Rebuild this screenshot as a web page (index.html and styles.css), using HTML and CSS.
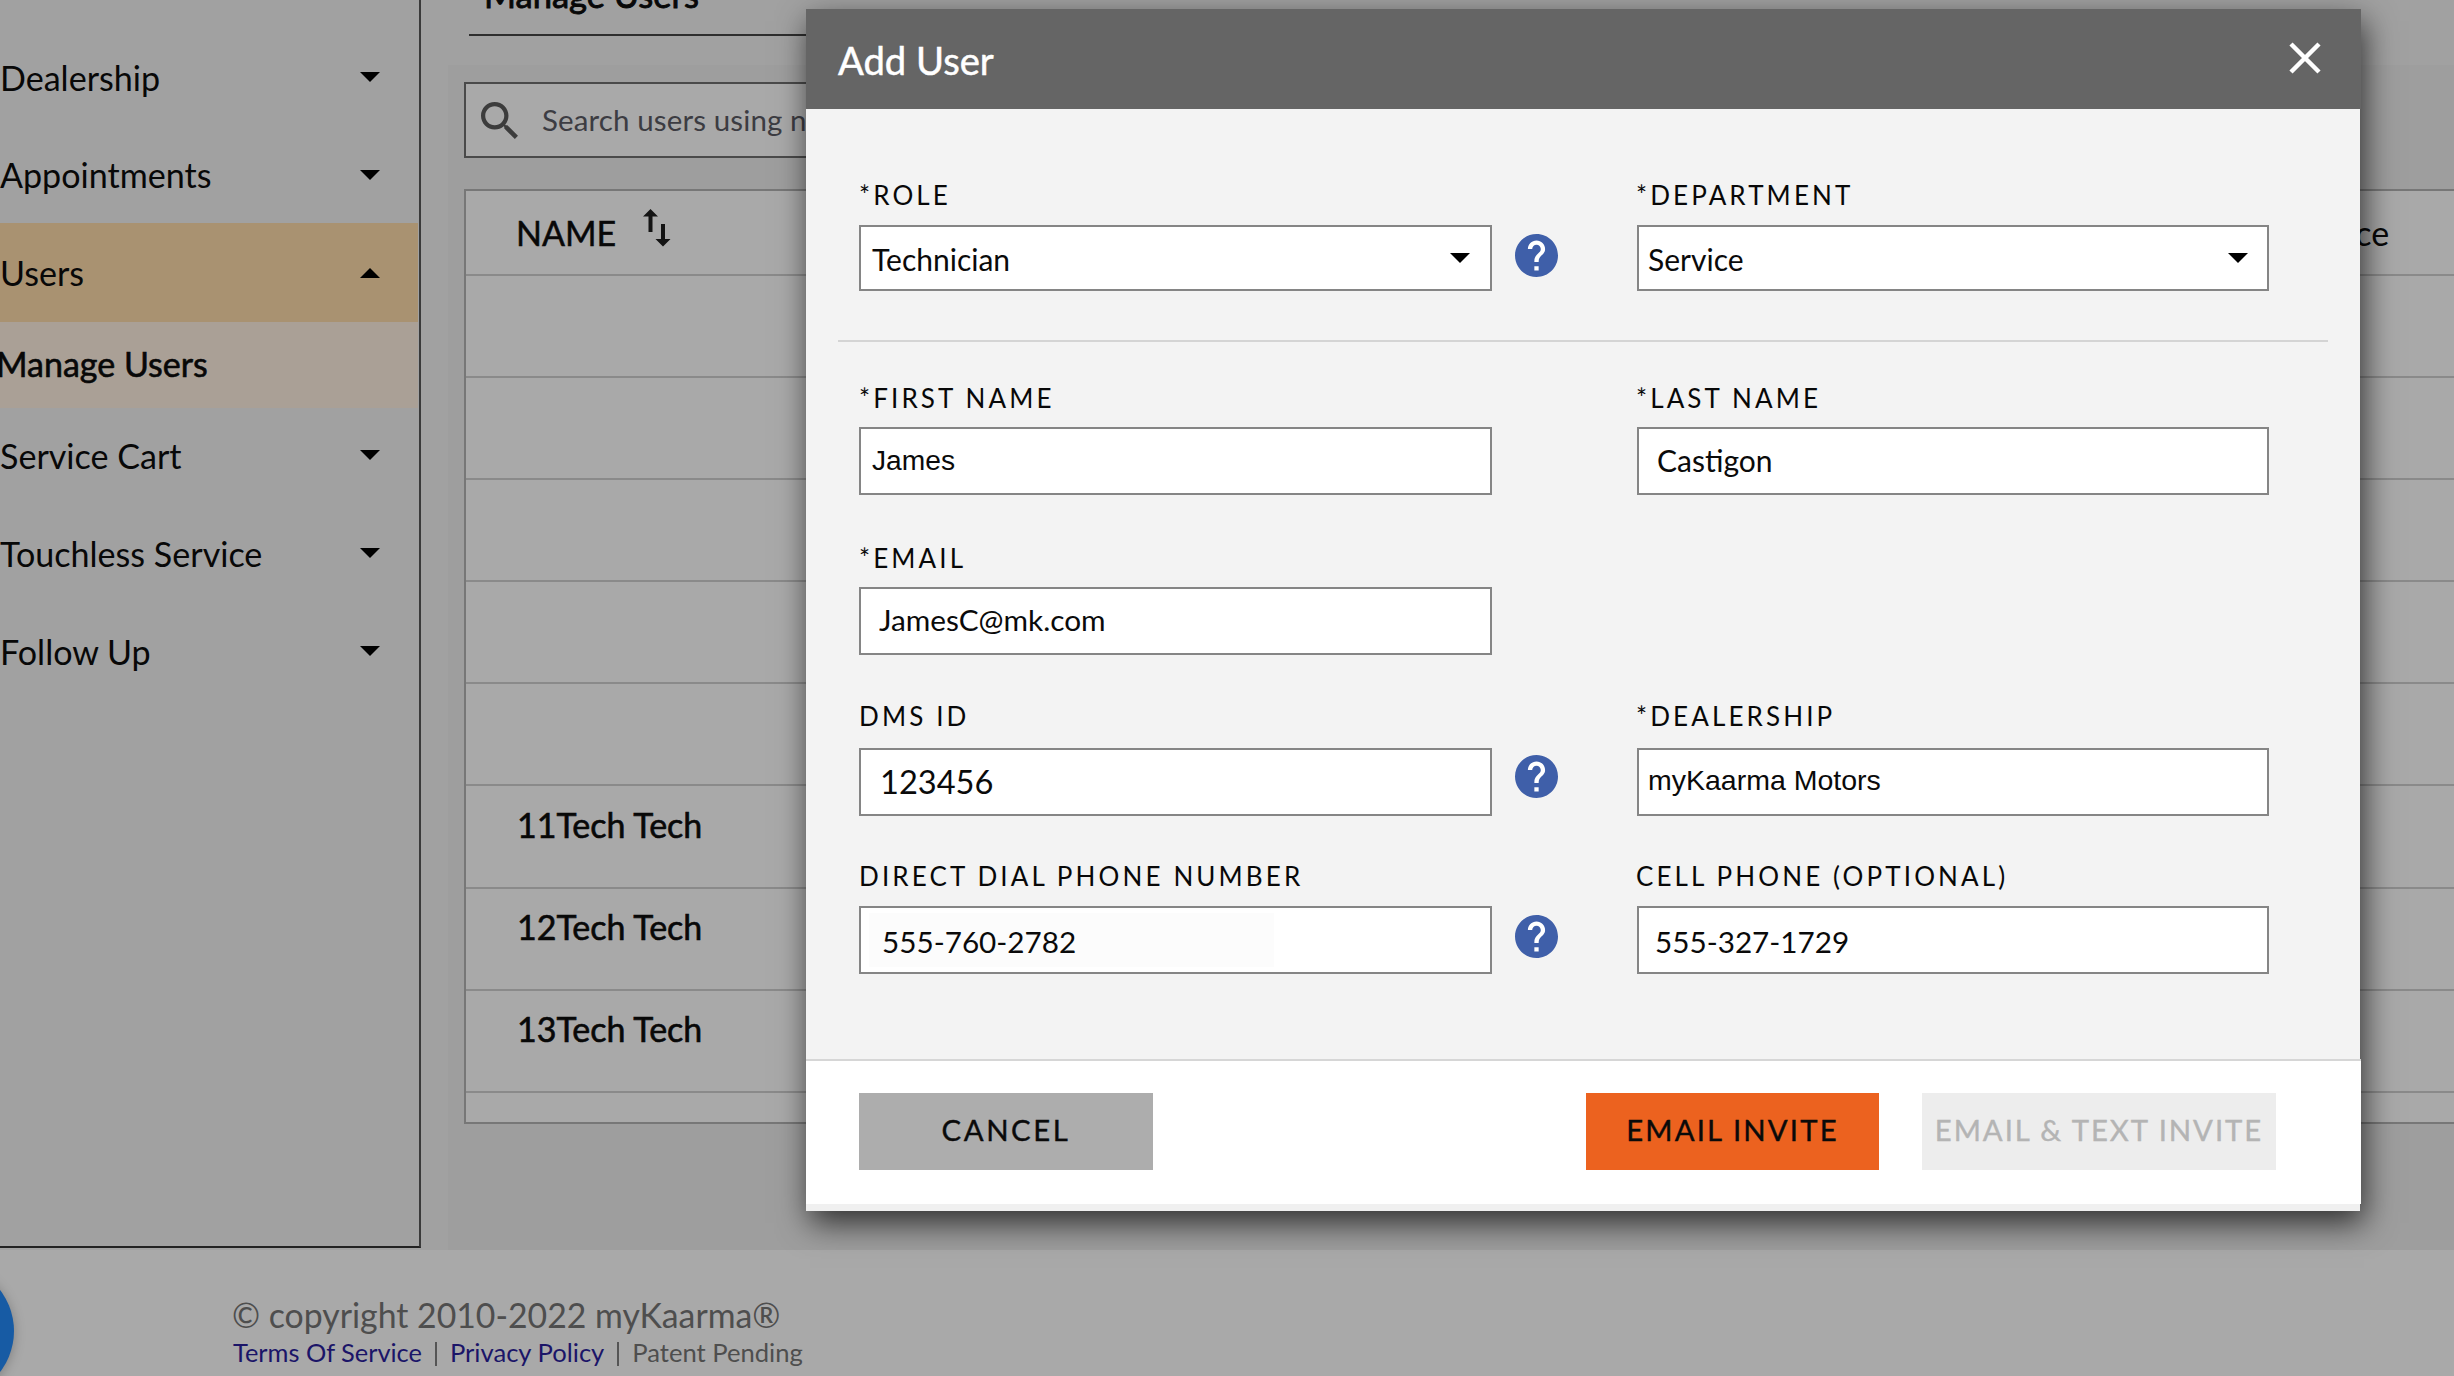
FILE: index.html
```html
<!DOCTYPE html>
<html lang="en">
<head>
<meta charset="utf-8">
<title>Manage Users</title>
<link rel="stylesheet" href="styles.css">
</head>
<body>
<svg class="defs" aria-hidden="true">
  <symbol id="help" viewBox="2 2 20 20">
    <circle cx="12" cy="12" r="9.5" fill="#fff"/>
    <path fill="#3f5fa9" d="M12 2C6.48 2 2 6.48 2 12s4.480 10 10 10 10-4.480 10-10S17.520 2 12 2zm1 17h-2v-2h2v2zm2.070-7.750l-.9.920C13.450 12.900 13 13.500 13 15h-2v-.5c0-1.100.450-2.100 1.170-2.830l1.240-1.260c.370-.360.590-.860.590-1.410 0-1.100-.9-2-2-2s-2 .9-2 2H8c0-2.210 1.790-4 4-4s4 1.790 4 4c0 .880-.360 1.680-.930 2.250z"/>
  </symbol>
</svg>

<div class="app">
  <nav class="sidebar">
    <a class="nav-item"><span>Dealership</span><i class="caret"></i></a>
    <a class="nav-item nav-item--appointments"><span>Appointments</span><i class="caret"></i></a>
    <a class="nav-item nav-item--open"><span>Users</span><i class="caret caret--up"></i></a>
    <a class="nav-sub">Manage Users</a>
    <a class="nav-item nav-item--after"><span>Service Cart</span><i class="caret"></i></a>
    <a class="nav-item"><span>Touchless Service</span><i class="caret"></i></a>
    <a class="nav-item"><span>Follow Up</span><i class="caret"></i></a>
  </nav>

  <main class="main">
    <header class="page-head"><h1 class="page-title">Manage Users</h1></header>
    <section class="content">
      <div class="search">
        <svg class="search-icon" viewBox="3 3 17.5 17.5"><path d="M15.500 14h-.79l-.28-.27C15.410 12.590 16 11.110 16 9.500 16 5.910 13.090 3 9.500 3S3 5.910 3 9.500 5.910 16 9.500 16c1.610 0 3.090-.59 4.230-1.570l.27.28v.79l5 4.990L20.490 19l-4.990-5zm-6 0C7.010 14 5 11.990 5 9.500S7.010 5 9.500 5 14 7.010 14 9.500 11.990 14 9.500 14z"/></svg>
        <span>Search users using name</span>
      </div>
      <div class="table">
        <div class="table-head">
          <div class="col-name">NAME
            <svg class="sort-icon" viewBox="0 0 28 38"><path d="M7.500 0L15 7.500H9.500V23H5.500V7.500H0zM18 15h4v15h5.500L20 37.500 12.500 30H18z"/></svg>
          </div>
          <div class="col-service">Service</div>
        </div>
        <div class="row"></div>
        <div class="row"></div>
        <div class="row"></div>
        <div class="row"></div>
        <div class="row"></div>
        <div class="row">11Tech Tech</div>
        <div class="row">12Tech Tech</div>
        <div class="row">13Tech Tech</div>
      </div>
    </section>
  </main>
</div>

<footer class="footer">
  <div class="copyright">© copyright 2010-2022 myKaarma®</div>
  <div class="legal"><a>Terms Of Service</a><span class="bar"></span><a>Privacy Policy</a><span class="bar"></span><span>Patent Pending</span></div>
</footer>
<div class="chat-bubble"></div>

<div class="modal">
  <div class="modal-head">
    <h2 class="modal-title">Add User</h2>
    <svg class="close" viewBox="0 0 32 32"><path d="M2 2L30 30M30 2L2 30"/></svg>
  </div>
  <div class="modal-body">
    <div class="fields fields--role">
      <div class="field"><label>*ROLE</label><div class="select select--role"><span>Technician</span><i class="caret"></i></div></div>
      <svg class="help help--role"><use href="#help"/></svg>
      <div class="field"><label>*DEPARTMENT</label><div class="select select--dept"><span>Service</span><i class="caret"></i></div></div>
    </div>
    <hr class="divider">
    <div class="fields fields--name">
      <div class="field"><label>*FIRST NAME</label><input class="input input--first" value="James"></div>
      <div class="field field--right"><label>*LAST NAME</label><input class="input input--last" value="Castigon"></div>
    </div>
    <div class="fields fields--email">
      <div class="field"><label>*EMAIL</label><input class="input input--email" value="JamesC@mk.com"></div>
    </div>
    <div class="fields fields--dms">
      <div class="field"><label>DMS ID</label><input class="input input--dms" value="123456"></div>
      <svg class="help help--dms"><use href="#help"/></svg>
      <div class="field"><label>*DEALERSHIP</label><input class="input input--dealer" value="myKaarma Motors"></div>
    </div>
    <div class="fields fields--phone">
      <div class="field"><label>DIRECT DIAL PHONE NUMBER</label><input class="input input--direct" value="555-760-2782"></div>
      <svg class="help help--phone"><use href="#help"/></svg>
      <div class="field"><label>CELL PHONE (OPTIONAL)</label><input class="input input--cell" value="555-327-1729"></div>
    </div>
  </div>
  <div class="modal-foot">
    <button class="btn btn--cancel">CANCEL</button>
    <button class="btn btn--email">EMAIL INVITE</button>
    <button class="btn btn--text">EMAIL &amp; TEXT INVITE</button>
  </div>
</div>
</body>
</html>
```
FILE: styles.css
```css
* { box-sizing: border-box; }

body {
  margin: 0;
  width: 2454px;
  height: 1376px;
  overflow: hidden;
  position: relative;
  background: #a9a9a9;
  color: #080808;
  font-family: Lato, sans-serif;
  font-size: 34px;
}

.defs { position: absolute; width: 0; height: 0; }

.app { display: grid; grid-template-columns: 421px 1fr; height: 1250px; background: #a1a1a1; }

/* Sidebar */
.sidebar {
  height: 1248px;
  padding-top: 28px;
  border-right: 2px solid #3a3a3a;
  border-bottom: 2px solid #222;
}
.nav-item {
  display: flex;
  align-items: center;
  justify-content: space-between;
  height: 98px;
  width: 418px;
  padding-right: 38px;
  font-size: 34.1px;
}
.nav-item--appointments { height: 97px; }
.nav-item--open { height: 99px; background: #a99271; }
.nav-item--after { margin-top: -2px; }
.nav-sub {
  display: flex;
  align-items: center;
  height: 86px;
  width: 418px;
  padding-bottom: 4px;
  text-indent: -4px;
  background: #aaa096;
  -webkit-text-stroke: .6px currentColor;
}
.caret {
  width: 0;
  height: 0;
  border: 10.500px solid transparent;
  border-top: 10.500px solid #000;
  border-bottom: 0;
}
.caret--up { border-top: 0; border-bottom: 10.500px solid #000; }

/* Main area */
.main { overflow: hidden; min-width: 0; display: flex; flex-direction: column; }
.page-head { height: 65px; flex: none; padding-left: 48px; }
.page-title {
  width: 1600px;
  height: 61px;
  margin: -25px 0 0;
  padding-left: 15px;
  border-bottom: 2px solid #2e2e2e;
  font-size: 34.500px;
  line-height: 40px;
  font-weight: 400;
  -webkit-text-stroke: .9px currentColor;
}
.content { flex: 1; margin-left: 27px; padding: 17px 0 0 16px; background: #9e9e9e; }
.search {
  display: flex;
  align-items: center;
  gap: 24px;
  width: 1100px;
  height: 76px;
  padding: 0 0 0 15px;
  border: 2px solid #4a4a4a;
  background: #a9a9a9;
  color: #3c3c42;
  font-size: 29.500px;
  letter-spacing: .12px;
}
.search span { padding-bottom: 1px; }
.search-icon { width: 37px; height: 37px; fill: #3c3c3c; }
.table {
  width: 2100px;
  height: 935px;
  margin-top: 31px;
  border: 2px solid #777;
  background: #a9a9a9;
}
.table-head { display: flex; align-items: center; height: 85px; padding-bottom: 1px; border-bottom: 2px solid #8a8a8a; }
.col-name { display: flex; align-items: center; width: 1815px; padding-left: 50px; gap: 27px; -webkit-text-stroke: .5px currentColor; }
.sort-icon { width: 28px; height: 38px; margin-top: -8px; fill: #141414; }
.row {
  display: flex;
  align-items: center;
  height: 102.100px;
  padding: 0 0 24px 51px;
  border-bottom: 2px solid #8a8a8a;
  -webkit-text-stroke: .6px currentColor;
}

/* Page footer */
.footer { padding: 44px 0 0 232px; color: #4e4e4e; }
.copyright { font-size: 33.800px; line-height: 42px; }
.legal { display: flex; align-items: center; height: 30px; margin-top: 1px; font-size: 25.600px; line-height: 30px; padding-left: 1px; }
.legal a { color: #1b1568; }
.legal a:first-child { font-size: 25.400px; }
.bar { width: 2px; height: 24px; margin: 4px 13px 0; background: #555; }
.chat-bubble {
  position: absolute;
  left: -120px;
  top: 1264px;
  width: 134px;
  height: 134px;
  border-radius: 50%;
  background: #175ba4;
  box-shadow: 0 2px 12px rgba(0, 0, 0, .25);
}

/* Dialog */
.modal {
  position: absolute;
  left: 806px;
  top: 9px;
  width: 1554px;
  height: 1202px;
  display: flex;
  flex-direction: column;
  background: #f0f0f0;
  box-shadow: 4px 12px 30px rgba(0, 0, 0, .7);
}
.modal-head {
  display: flex;
  align-items: center;
  justify-content: space-between;
  width: 1555px;
  height: 100px;
  padding: 0 40px 2px 32px;
  background: #656565;
  color: #fff;
}
.modal-title { margin: 0 0 -3px; font-size: 38.200px; font-weight: 400; -webkit-text-stroke: .5px currentColor; }
.close { width: 32px; height: 32px; fill: none; stroke: #fff; stroke-width: 4.500; }
.modal-body { height: 950px; padding: 69px 0 0 53px; background: #f3f3f3; }
.fields { display: grid; grid-template-columns: 633px 145px 632px; }
.fields--name { margin-top: 39px; }
.fields--email { margin-top: 46px; }
.fields--dms { margin-top: 44px; }
.fields--phone { margin-top: 43px; }
.field { display: flex; flex-direction: column; gap: 13px; }
.field--right { grid-column: 3; }
.fields--name .field, .fields--email .field { gap: 12px; }
.fields--dms .field { gap: 15px; }
.field label { font-size: 26px; line-height: 34px; letter-spacing: 3.120px; white-space: nowrap; }
.field:last-child:not(:first-child) label { text-indent: -1px; }
.select, .input {
  width: 100%;
  height: 68px;
  margin: 0;
  border: 2px solid #858585;
  border-radius: 0;
  background: #fff;
  color: #0a0a0a;
  font: 30px Lato, sans-serif;
}
.select { display: flex; align-items: center; justify-content: space-between; height: 66px; }
.select span { padding-top: 2px; }
.select--role { padding: 0 20px 0 11px; }
.select--dept { padding: 0 19px 0 9px; }
.input--first { padding: 0 0 2px 11px; font: 28.200px "Liberation Sans", sans-serif; }
.input--last { padding: 0 0 2px 18px; }
.input--email { padding: 0 0 4px 18px; font-size: 29.800px; }
.input--dms { padding: 0 0 2px 19px; font-size: 32.600px; }
.input--dealer { padding: 0 0 3px 9px; font: 28.500px "Liberation Sans", sans-serif; }
.input--direct {
  padding: 3px 0 0 21px;
  font-size: 29.700px;
  background: linear-gradient(#fcfcfc, #fcfcfc) 8px 5px / 405px 54px no-repeat #fff;
}
.input--cell { padding: 3px 0 0 16px; font-size: 29.700px; }
.help { width: 43px; height: 43px; margin-left: 23px; align-self: end; }
.help--role { margin-bottom: 14px; }
.help--dms { margin-bottom: 18px; }
.help--phone { margin-bottom: 16px; }
.divider { width: 1490px; height: 2px; margin: 49px 0 0 -21px; border: 0; background: #d4d4d4; }
.modal-foot {
  display: flex;
  width: 1555px;
  height: 145px;
  padding: 32px 85px 0 53px;
  border-top: 2px solid #d6d6d6;
  background: #fff;
}
.btn {
  height: 77px;
  padding: 0 0 4px;
  border: 0;
  font: 400 29.300px Lato, sans-serif;
  -webkit-text-stroke: .4px currentColor;
  letter-spacing: 2.150px;
  white-space: nowrap;
  color: #0a0a0a;
}
.btn--cancel { width: 294px; margin-right: auto; background: #adadad; letter-spacing: 2.600px; }
.btn--email { width: 293px; margin-right: 43px; background: #ec621f; }
.btn--text { width: 354px; background: #ededed; color: #b4b4b4; letter-spacing: 1.950px; }
```
